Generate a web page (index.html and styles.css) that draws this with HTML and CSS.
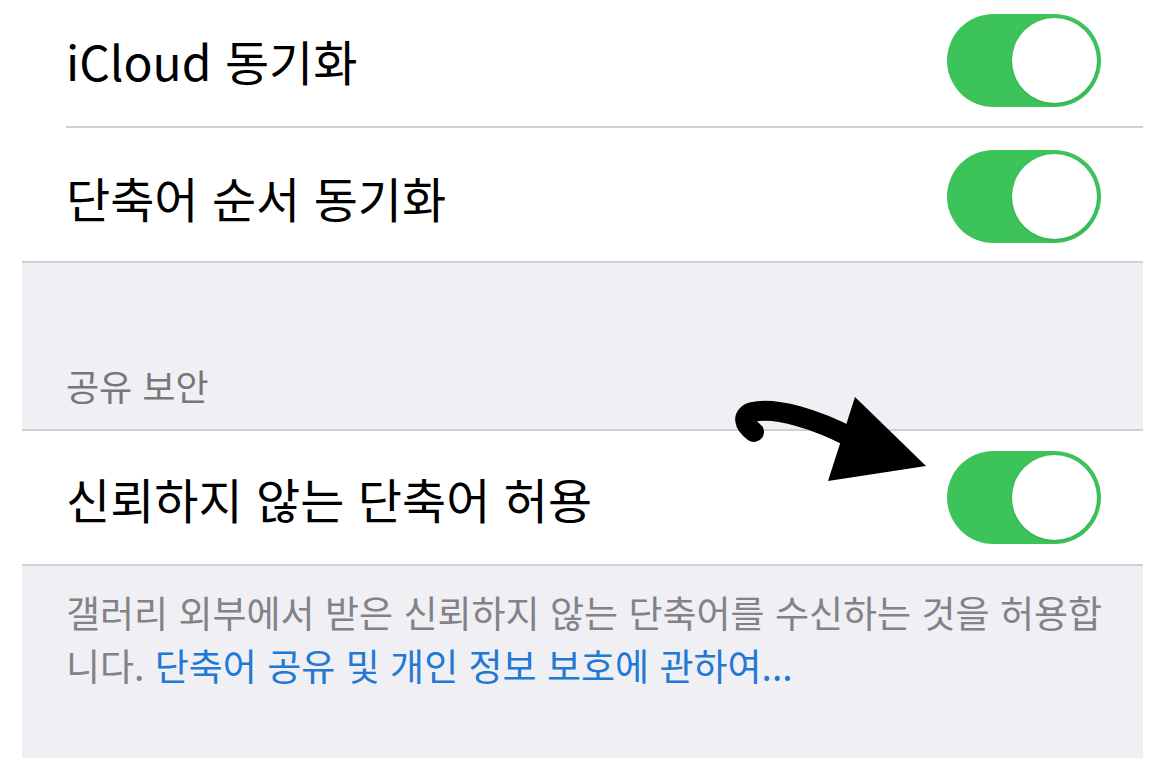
FILE: index.html
```html
<!DOCTYPE html>
<html lang="ko">
<head>
<meta charset="utf-8">
<link rel="stylesheet" href="styles.css">
</head>
<body>
<div class="page">
  <div class="group top">
    <div class="row first">
      <span class="label">iCloud 동기화</span>
      <span class="toggle"><span class="knob"></span></span>
    </div>
    <div class="row second">
      <span class="label">단축어 순서 동기화</span>
      <span class="toggle"><span class="knob"></span></span>
    </div>
  </div>
  <div class="header">공유 보안</div>
  <div class="group">
    <div class="row">
      <span class="label">신뢰하지 않는 단축어 허용</span>
      <span class="toggle"><span class="knob"></span></span>
    </div>
  </div>
  <div class="footer">
    <p>갤러리 외부에서 받은 신뢰하지 않는 단축어를 수신하는 것을 허용합니다. <span class="link">단축어 공유 및 개인 정보 보호에 관하여...</span></p>
  </div>
  <svg class="arrow" width="210" height="100" viewBox="0 0 210 100">
    <path d="M24 44 C14 37 11 27 23 24 C46 19 86 31 122 50" fill="none" stroke="#000" stroke-width="20" stroke-linecap="round"/>
    <polygon points="125,9 196,78 98,93" fill="#000"/>
  </svg>
</div>
</body>
</html>
```
FILE: styles.css
```css
html, body {
  margin: 0;
  padding: 0;
  background: #ffffff;
}
body {
  width: 1168px;
  height: 758px;
  overflow: hidden;
  font-family: "Noto Sans CJK KR", "Noto Sans", sans-serif;
}
.page {
  position: relative;
  margin-left: 22px;
  width: 1121px;
}
.group {
  background: #ffffff;
  border-bottom: 2px solid #d0d0d4;
}
.row {
  height: 133px;
  margin-left: 44px;
  padding-right: 42px;
  display: flex;
  align-items: center;
  justify-content: space-between;
  box-sizing: border-box;
}
.row.first {
  height: 128px;
  padding-bottom: 6px;
  border-bottom: 2px solid #d0d0d4;
}
.row.second {
  padding-top: 4px;
}
.label {
  font-size: 48px;
  color: #000;
  line-height: 1;
}
.toggle {
  width: 154px;
  height: 93px;
  border-radius: 47px;
  background: #3cc35a;
  display: flex;
  align-items: center;
  justify-content: flex-end;
  padding: 4px;
  box-sizing: border-box;
}
.knob {
  width: 85px;
  height: 85px;
  border-radius: 50%;
  background: #fff;
  box-shadow: 0 1px 3px rgba(0,0,0,0.12);
}
.header {
  background: #efeff4;
  height: 168px;
  box-sizing: border-box;
  padding: 99px 0 0 44px;
  font-size: 36px;
  line-height: 46px;
  color: #77777b;
  border-bottom: 2px solid #d0d0d4;
}
.footer {
  background: #efeff4;
  height: 193px;
  box-sizing: border-box;
  padding: 20px 38px 0 44px;
}
.footer p {
  margin: 0;
  font-size: 37px;
  line-height: 53px;
  color: #828287;
}
.link {
  color: #2179d4;
}
.arrow {
  position: absolute;
  left: 708px;
  top: 388px;
}
```
